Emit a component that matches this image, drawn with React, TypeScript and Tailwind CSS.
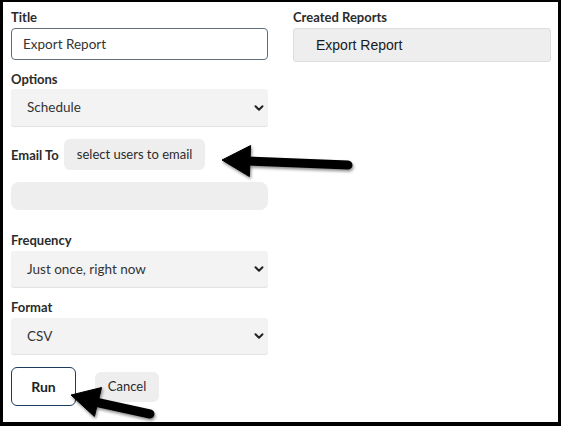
import React from 'react';

const Chevron: React.FC = () => (
    <svg className="h-[10px] w-[10px]" viewBox="0 0 10 10" fill="none" aria-hidden="true">
        <path d="M1.5 3.2 5 6.7 8.5 3.2" stroke="#222" strokeWidth={2} strokeLinecap="round" strokeLinejoin="round" />
    </svg>
);

const FakeSelect: React.FC<{ value: string; tall?: boolean }> = ({ value, tall }) => (
    <div
        className={`flex items-center justify-between rounded-[3px] bg-[#f3f3f3] pl-4 pr-[4px] text-[13.5px] text-[#333] shadow-[0_1px_0_#e2e2e2] ${tall ? 'h-[37px]' : 'h-[36px]'
            }`}
    >
        <span>{value}</span>
        <Chevron />
    </div>
);

const Label: React.FC<{ children: React.ReactNode; className?: string }> = ({ children, className }) => (
    <div className={`text-[13px] leading-4 font-bold text-[#2b2b2b] ${className ?? ''}`}>{children}</div>
);

const Arrows: React.FC = () => (
    <svg className="pointer-events-none absolute left-0 top-0" width={561} height={426} viewBox="0 0 561 426">
        <defs>
            <filter id="shadow" x="-20%" y="-50%" width="140%" height="200%">
                <feDropShadow dx="1" dy="2" stdDeviation="1.5" floodColor="#000" floodOpacity="0.45" />
            </filter>
        </defs>
        {/* arrow pointing at the email picker */}
        <g filter="url(#shadow)" fill="#000" stroke="#000">
            <line x1={244} y1={159} x2={345} y2={163} strokeWidth={9} strokeLinecap="round" />
            <polygon points="219,158 247.6,143.5 246.4,174.5" strokeWidth={1} strokeLinejoin="round" />
        </g>
        {/* arrow pointing at the run button */}
        <g filter="url(#shadow)" fill="#000" stroke="#000">
            <line x1={92} y1={400} x2={147} y2={412} strokeWidth={9} strokeLinecap="round" />
            <polygon points="68,393 98.6,385.5 91.4,414.5" strokeWidth={1} strokeLinejoin="round" />
        </g>
    </svg>
);

const App: React.FC = () => {
    return (
        <div className="relative h-[426px] w-[561px] overflow-hidden border-b-4 border-l-[3px] border-r-[3px] border-t-2 border-black bg-white font-['Lato',sans-serif]">
            <div className="grid grid-cols-[257px_258px] gap-x-[25px] pl-[8px] pt-[7px]">
                {/* left column */}
                <div className="flex flex-col">
                    <Label>Title</Label>
                    <div className="mt-[3px] flex h-[32px] items-center rounded-[4px] border border-[#5f6f7e] px-[11px] text-[13.5px] text-[#333]">
                        Export Report
                    </div>

                    <Label className="mt-[11px]">Options</Label>
                    <div className="mt-[2px]">
                        <FakeSelect value="Schedule" tall />
                    </div>

                    <div className="mt-[13px] flex items-center gap-[5px]">
                        <Label>Email To</Label>
                        <div className="flex h-[31px] items-center rounded-[6px] bg-[#eeeeee] px-[13px] text-[13px] text-[#2b2b2b]">
                            select users to email
                        </div>
                    </div>

                    <div className="mt-[12px] h-[28px] rounded-[8px] bg-[#eeeeee]" />

                    <Label className="mt-[22px]">Frequency</Label>
                    <div className="mt-[3px]">
                        <FakeSelect value="Just once, right now" />
                    </div>

                    <Label className="mt-[12px]">Format</Label>
                    <div className="mt-[3px]">
                        <FakeSelect value="CSV" />
                    </div>

                    <div className="mt-[13px] flex items-center gap-[19px]">
                        <button className="h-[39px] w-[65px] rounded-[6px] border border-[#1d3c5c] bg-white text-[14px] font-bold text-[#222]">
                            Run
                        </button>
                        <button className="mt-[1px] h-[30px] w-[64px] rounded-[6px] bg-[#eeeeee] text-[13px] text-[#2b2b2b]">
                            Cancel
                        </button>
                    </div>
                </div>

                {/* right column */}
                <div className="flex flex-col">
                    <Label>Created Reports</Label>
                    <div className="mt-[3px] flex h-[34px] items-center rounded-[3px] border border-[#dddddd] bg-[#eeeeee] pl-[22px] font-['Liberation_Sans',Arial,sans-serif] text-[14px] text-[#1a1a1a]">
                        Export Report
                    </div>
                </div>
            </div>
            <Arrows />
        </div>
    );
};

export default App;
